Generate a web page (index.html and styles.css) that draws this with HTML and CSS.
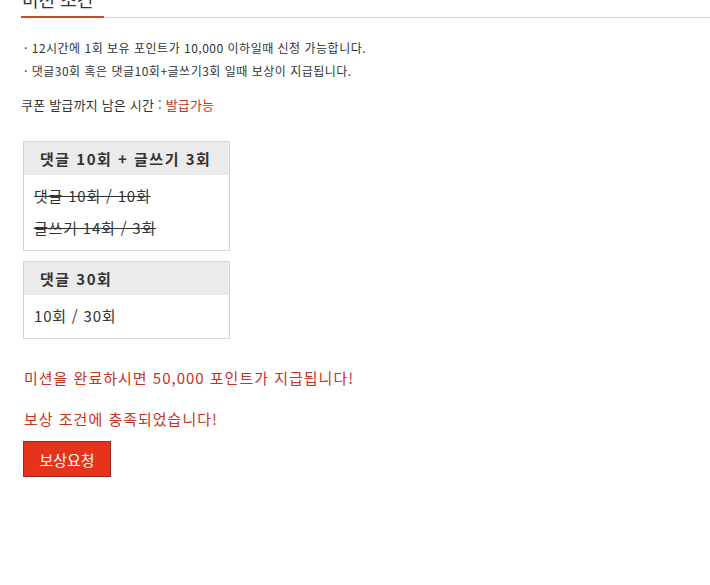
FILE: index.html
```html
<!DOCTYPE html>
<html lang="ko">
<head>
  <meta charset="UTF-8" />
  <title>미션 조건</title>
  <link rel="stylesheet" href="styles.css">
</head>
<body>
  <div class="tab-head">
    <h2>미션 조건</h2>
  </div>

  <ul class="notice">
    <li>12시간에 1회 보유 포인트가 10,000 이하일때 신청 가능합니다.</li>
    <li>댓글30회 혹은 댓글10회+글쓰기3회 일때 보상이 지급됩니다.</li>
  </ul>

  <p class="timer">쿠폰 발급까지 남은 시간 : <span class="red">발급가능</span></p>

  <div class="mission">
    <div class="mission-title">댓글 10회 + 글쓰기 3회</div>
    <div class="mission-body">
      <p class="done">댓글 10회 / 10회</p>
      <p class="done">글쓰기 14회 / 3회</p>
    </div>
  </div>

  <div class="mission">
    <div class="mission-title">댓글 30회</div>
    <div class="mission-body">
      <p>10회 / 30회</p>
    </div>
  </div>

  <p class="msg">미션을 완료하시면 50,000 포인트가 지급됩니다!</p>
  <p class="msg">보상 조건에 충족되었습니다!</p>
  <button class="btn-reward">보상요청</button>
</body>
</html>
```

FILE: styles.css
```css
body {
  margin: 0;
  padding: 0 0 0 21px;
  font-family: "Noto Sans CJK KR", "Noto Sans", sans-serif;
  color: #333;
  background: #fff;
}
.tab-head {
  border-bottom: 1px solid #cfcfcf;
  margin-top: -12px;
}
.tab-head h2 {
  display: inline-block;
  margin: 0 0 -1px;
  width: 83px;
  font-size: 18px;
  font-weight: normal;
  line-height: 22px;
  padding-bottom: 6px;
  border-bottom: 2px solid #c84a25;
  box-sizing: border-box;
  padding-left: 1px;
}
.notice {
  list-style: none;
  margin: 18px 0 0;
  padding: 0 0 0 3px;
  font-size: 12px;
  letter-spacing: 0.5px;
  line-height: 23px;
}
.notice li:before {
  content: "· ";
}
.timer {
  margin: 15px 0 0;
  font-size: 13px;
  letter-spacing: 0.2px;
  line-height: 16px;
}
.red {
  color: #c8321e;
}
.mission {
  width: 207px;
  box-sizing: border-box;
  margin: 0 0 10px 2px;
  border: 1px solid #d6d6d6;
}
.timer + .mission {
  margin-top: 28px;
}
.mission-title {
  background: #ebebeb;
  height: 33px;
  line-height: 33px;
  padding-left: 16px;
  font-size: 15px;
  font-weight: bold;
  letter-spacing: 1.5px;
  color: #333;
}
.mission-body {
  padding: 5px 10px 6px;
}
.mission-body p {
  margin: 0;
  font-size: 15px;
  letter-spacing: 0.8px;
  line-height: 32px;
}
.done {
  text-decoration: line-through;
}
.msg {
  margin: 29px 0 0 3px;
  font-size: 15px;
  letter-spacing: 1px;
  line-height: 20px;
  color: #c8321e;
}
.msg + .msg {
  margin-top: 21px;
}
.btn-reward {
  margin: 12px 0 0 2px;
  width: 88px;
  height: 36px;
  background: #e5331c;
  border: 1px solid #9c2a1c;
  color: #fff;
  font-family: "Noto Sans CJK KR", sans-serif;
  font-size: 15px;
  padding: 0;
}
```
